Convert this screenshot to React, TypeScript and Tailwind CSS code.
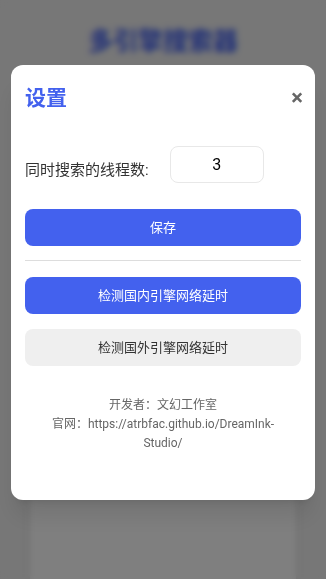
import { useState } from "react"

const font = { fontFamily: 'Roboto, "Noto Sans CJK SC", sans-serif' }

export default function App() {
  const [threads, setThreads] = useState("3")

  return (
    <div className="relative h-[579px] w-[326px] overflow-hidden bg-[#eeeeee]" style={font}>
      {/* page behind the dialog */}
      <div className="flex flex-col items-center px-[30px] pt-[26px]">
        <h1 className="text-[25px] font-bold leading-[32px] text-[#4361ee]">多引擎搜索器</h1>
        <div className="mt-[20px] h-[600px] w-full rounded-xl bg-white shadow-md" />
      </div>

      {/* overlay */}
      <div className="absolute inset-0 flex justify-center bg-black/50 pt-[65px] backdrop-blur-[3px]">
        <div className="h-fit w-[304px] rounded-[12px] bg-white px-[14px] pb-[47px] pt-[19px] shadow-xl">
          <div className="flex items-center justify-between">
            <h2 className="text-[21px] font-bold leading-[28px] text-[#4361ee]">设置</h2>
            <button className="mr-[-2px] text-[22px] font-bold leading-[28px] text-[#666666]">×</button>
          </div>

          <div className="mt-[34px] flex items-end">
            <label className="pb-[2px] text-[15px] leading-[22px] text-[#333333]">同时搜索的线程数:</label>
            <input
              value={threads}
              onChange={(e) => setThreads(e.target.value)}
              className="ml-[21px] h-[37px] w-[94px] rounded-[8px] border border-[#e8e8e8] text-center text-[16px] text-black outline-none"
            />
          </div>

          <button className="mt-[26px] h-[37px] w-full rounded-[8px] bg-[#4361ee] text-[13px] text-white">保存</button>

          <div className="my-[14px] h-px bg-[#dddddd]" />

          <button className="mt-[2px] h-[37px] w-full rounded-[8px] bg-[#4361ee] text-[13px] text-white">
            检测国内引擎网络延时
          </button>
          <button className="mt-[15px] h-[37px] w-full rounded-[8px] bg-[#efefef] text-[13px] text-[#333333]">
            检测国外引擎网络延时
          </button>

          <div className="mt-[30px] px-[10px] text-center text-[12px] leading-[19px] text-[#666666]">
            <p>开发者：文幻工作室</p>
            <p>官网：https://atrbfac.github.io/DreamInk-Studio/</p>
          </div>
        </div>
      </div>
    </div>
  )
}
